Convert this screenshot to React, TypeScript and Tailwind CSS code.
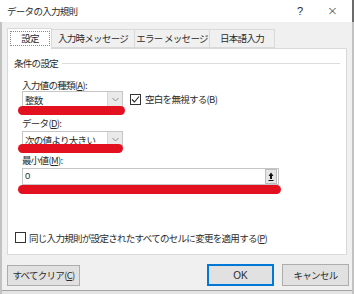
import React from 'react';

const Chevron = () => (
  <svg width="7" height="5" viewBox="0 0 7 5" fill="none">
    <path d="M0.5 1 L3.5 4 L6.5 1" stroke="#8a8a8a" strokeWidth="1" />
  </svg>
);

const CheckBox = ({ checked }: { checked?: boolean }) => (
  <div className="w-[11px] h-[11px] border border-[#333] bg-white flex items-center justify-center shrink-0">
    {checked && (
      <svg width="9" height="9" viewBox="0 0 9 9" fill="none">
        <path d="M1 4.5 L3.5 7 L8 1.5" stroke="#222" strokeWidth="1.1" />
      </svg>
    )}
  </div>
);

const ComboBox = ({ value, width }: { value: string; width: string }) => (
  <div className={`${width} h-[17px] border border-[#c6c6c6] bg-white flex items-center`}>
    <span className="flex-1 pl-[2px] pt-[2px] leading-none">{value}</span>
    <div className="w-[15px] h-full bg-[#eaeaea] border-l border-[#d4d4d4] flex items-center justify-center">
      <Chevron />
    </div>
  </div>
);

const tabs = [
  { label: '入力時メッセージ', w: 'w-[83px]' },
  { label: 'エラー メッセージ', w: 'w-[75px]' },
  { label: '日本語入力', w: 'w-[65px]' },
];

export default function App() {
  return (
    <div className="relative w-[354px] h-[294px] overflow-hidden bg-[#f0f0f0] text-[#2b2b2b] text-[9.5px] tracking-[-0.7px] font-['Noto_Sans_CJK_JP',sans-serif] flex flex-col">
      {/* title bar */}
      <div className="h-[22px] bg-white border-r-2 border-[#6b6b6b] flex items-center justify-between pl-[7px] pr-[14px] shrink-0">
        <span>データの入力規則</span>
        <div className="flex items-center gap-[24px] text-[11px] tracking-normal">
          <span className="font-['Liberation_Sans',sans-serif]">?</span>
          <span className="text-[13px] font-light font-['DejaVu_Sans',sans-serif]">×</span>
        </div>
      </div>

      <div className="flex-1 flex flex-col border-x-2 border-l-[#c2c2c2] border-r-[#c2c2c2]">
        {/* tabs */}
        <div className="flex ml-[5px] mt-[6px] h-[20px] items-end">
          <div className="w-[45px] h-[21px] -mb-px relative z-10 bg-white border border-b-0 border-[#d9d9d9] pt-[2px] pl-[2px] pr-[1px] pb-[3px] flex">
            <div className="flex-1 border border-dotted border-[#8a8a8a] flex items-center justify-center">設定</div>
          </div>
          {tabs.map((t) => (
            <div key={t.label} className={`${t.w} h-[19px] bg-[#f0f0f0] border border-l-0 border-[#d9d9d9] flex items-center justify-center`}>
              {t.label}
            </div>
          ))}
        </div>

        {/* panel */}
        <div className="ml-[5px] w-[340px] h-[207px] bg-white border border-[#d9d9d9] flex flex-col pl-[6px] pr-[6px]">
          <div className="mt-[8px] h-[12px] flex items-center gap-[4px]">
            <span>条件の設定</span>
            <div className="flex-1 h-px bg-[#dcdcdc]" />
          </div>

          <div className="pl-[8px] flex flex-col">
            <div className="mt-[10px] h-[12px] flex items-center">入力値の種類(<span className="underline">A</span>):</div>
            <div className="flex items-center">
              <ComboBox value="整数" width="w-[101px]" />
              <div className="ml-[7px] flex items-center gap-[4px]">
                <CheckBox checked />
                <span>空白を無視する(B)</span>
              </div>
            </div>

            <div className="mt-[9px] h-[12px] flex items-center">データ(<span className="underline">D</span>):</div>
            <div className="mt-[2px]">
              <ComboBox value="次の値より大きい" width="w-[101px]" />
            </div>

            <div className="mt-[6px] h-[12px] flex items-center">最小値(<span className="underline">M</span>):</div>
            <div className="mt-[2px] w-[257px] h-[17px] border border-[#c6c6c6] flex items-center">
              <span className="flex-1 pl-[2px] font-['Liberation_Sans',sans-serif] tracking-normal">0</span>
              <div className="w-[12px] h-[15px] mr-px bg-[#e6e6e6] border border-[#bdbdbd] flex items-center justify-center">
                <svg width="6" height="10" viewBox="0 0 6 10">
                  <path d="M3 0.5 L5.5 4 L4 4 L4 7 L2 7 L2 4 L0.5 4 Z" fill="#111" />
                  <rect x="0.5" y="8" width="5" height="1" fill="#111" />
                </svg>
              </div>
            </div>
          </div>

          <div className="mt-auto mb-[9px] ml-px flex items-center gap-[3px]">
            <CheckBox />
            <span>同じ入力規則が設定されたすべてのセルに変更を適用する(<span className="underline">P</span>)</span>
          </div>
        </div>

        {/* buttons */}
        <div className="mt-[9px] pl-[5px] pr-[3px] flex items-center justify-between">
          <div className="w-[73px] h-[21px] bg-[#e1e1e1] border border-[#adadad] flex items-center justify-center">
            すべてクリア(<span className="underline">C</span>)
          </div>
          <div className="flex gap-[8px]">
            <div className="w-[67px] h-[22px] bg-[#e1e1e1] border border-[#0078d7] shadow-[inset_0_0_0_1px_#0078d7] flex items-center justify-center font-['Liberation_Sans',sans-serif] tracking-normal text-[10px]">
              OK
            </div>
            <div className="w-[67px] h-[22px] bg-[#e1e1e1] border border-[#adadad] flex items-center justify-center">
              キャンセル
            </div>
          </div>
        </div>

        <div className="mt-auto h-[4px] border-t border-[#a3a3a3] bg-[#e4e4e4]" />
      </div>

      {/* red marker strokes over the form */}
      <div className="absolute left-[18px] top-[106px] w-[107px] h-[9px] rounded-full bg-[#e3111f]" />
      <div className="absolute left-[18px] top-[144px] w-[105px] h-[9px] rounded-full bg-[#e3111f]" />
      <div className="absolute left-[18px] top-[185px] w-[263px] h-[9px] rounded-full bg-[#e3111f]" />
    </div>
  );
}
